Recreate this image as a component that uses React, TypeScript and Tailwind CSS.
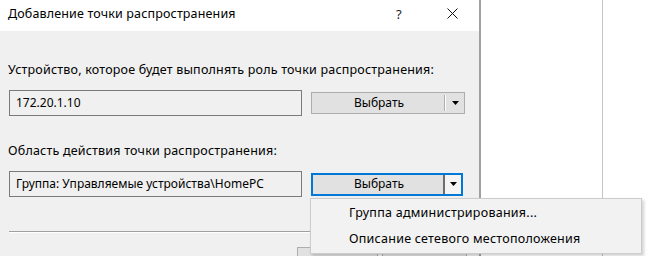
import { useState } from "react";

const FONT = "font-['Noto_Sans','Open_Sans',sans-serif]";

function Arrow() {
    return (
        <svg width="7" height="4" viewBox="0 0 7 4" className="block">
            <polygon points="0,0 7,0 3.5,4" fill="#000" />
        </svg>
    );
}

function SplitButton({ focused }: { focused?: boolean }) {
    if (focused) {
        return (
            <div className="flex h-[23px] w-[152px] border-2 border-[#0078d7] bg-[#e1e1e1]">
                <div className="flex flex-1 items-center justify-center pl-[2px] text-[12px] leading-none">
                    Выбрать
                </div>
                <div className="flex w-[18px] items-center justify-center border-l-2 border-[#6d6d6d] bg-[#f4f4f4] pb-[1px]">
                    <Arrow />
                </div>
            </div>
        );
    }
    return (
        <div className="flex h-[22px] w-[154px] items-center border border-[#adadad] bg-[#e1e1e1]">
            <div className="flex flex-1 items-center justify-center pl-[2px] text-[12px] leading-none">
                Выбрать
            </div>
            <span className="h-[16px] w-px bg-[#adadad]" />
            <span className="h-[16px] w-px bg-white" />
            <div className="flex w-[18px] items-center justify-center pb-[1px]">
                <Arrow />
            </div>
        </div>
    );
}

function Field({ value }: { value: string }) {
    return (
        <div className="flex h-[26px] w-[293px] items-center border border-[#7a7a7a] bg-[#f0f0f0] pl-[6px] text-[12px] leading-none text-black">
            {value}
        </div>
    );
}

export default function App() {
    const [menuOpen] = useState(true);

    return (
        <div className={`relative flex h-[256px] w-[650px] overflow-hidden bg-white text-black ${FONT}`}>
            <div className="flex w-[479px] flex-none flex-col">
                <header className="flex h-[31px] flex-none items-start bg-white pt-[6px] pl-[8px] text-[12.5px] leading-[16px] tracking-[0.15px]">
                    <span className="flex-1">Добавление точки распространения</span>
                    <span className="w-[10px] text-[13px] leading-[16px] text-[#222]">?</span>
                    <span className="ml-[41px] mr-[21px] mt-[2px]">
                        <svg width="11" height="11" viewBox="0 0 11 11">
                            <path d="M0.5 0.5 L10.5 10.5 M10.5 0.5 L0.5 10.5" stroke="#111" strokeWidth="1" fill="none" />
                        </svg>
                    </span>
                </header>

                <div className="flex flex-1 flex-col bg-[#f0f0f0] pt-[31px]">
                    <p className="pl-[8px] text-[12.5px] leading-[16px] tracking-[0.2px]">
                        Устройство, которое будет выполнять роль точки распространения:
                    </p>
                    <div className="mt-[12px] flex items-center gap-[9px] pl-[9px]">
                        <Field value="172.20.1.10" />
                        <SplitButton />
                    </div>

                    <p className="mt-[27px] pl-[8px] text-[12.5px] leading-[16px] tracking-[0.2px]">
                        Область действия точки распространения:
                    </p>
                    <div className="mt-[12px] flex items-center gap-[9px] pl-[9px]">
                        <Field value="Группа: Управляемые устройства\HomePC" />
                        <SplitButton focused />
                    </div>

                    <div className="mt-[34px] ml-[9px] mr-[9px] border-t border-b border-t-[#a0a0a0] border-b-white" />

                    <div className="mt-[14px] flex gap-[4px] pl-[297px]">
                        <div className="flex h-[23px] w-[81px] justify-center border border-[#adadad] bg-[#e1e1e1] pt-[7px] text-[12px] leading-none">
                            ОК
                        </div>
                        <div className="flex h-[23px] w-[85px] justify-center border border-[#adadad] bg-[#e1e1e1] pt-[7px] text-[12px] leading-none">
                            Отмена
                        </div>
                    </div>
                </div>
            </div>

            <div className="w-[2px] flex-none bg-[#a0a0a0]" />
            <div className="w-[121px] flex-none bg-white" />
            <div className="w-px flex-none bg-[#c4c4c4]" />
            <div className="flex-1 bg-white" />

            {menuOpen && (
                <div className="absolute left-[310px] top-[198px] flex h-[56px] w-[332px] flex-col border border-[#cccccc] bg-[#f2f2f2] py-[1px] shadow-[2px_2px_3px_rgba(0,0,0,0.18)]">
                    <div className="flex h-[26px] items-center pl-[38px] text-[12.5px] leading-none tracking-[0.25px]">
                        Группа администрирования...
                    </div>
                    <div className="flex h-[26px] items-center pl-[38px] text-[12.5px] leading-none tracking-[0.25px]">
                        Описание сетевого местоположения
                    </div>
                </div>
            )}
        </div>
    );
}
